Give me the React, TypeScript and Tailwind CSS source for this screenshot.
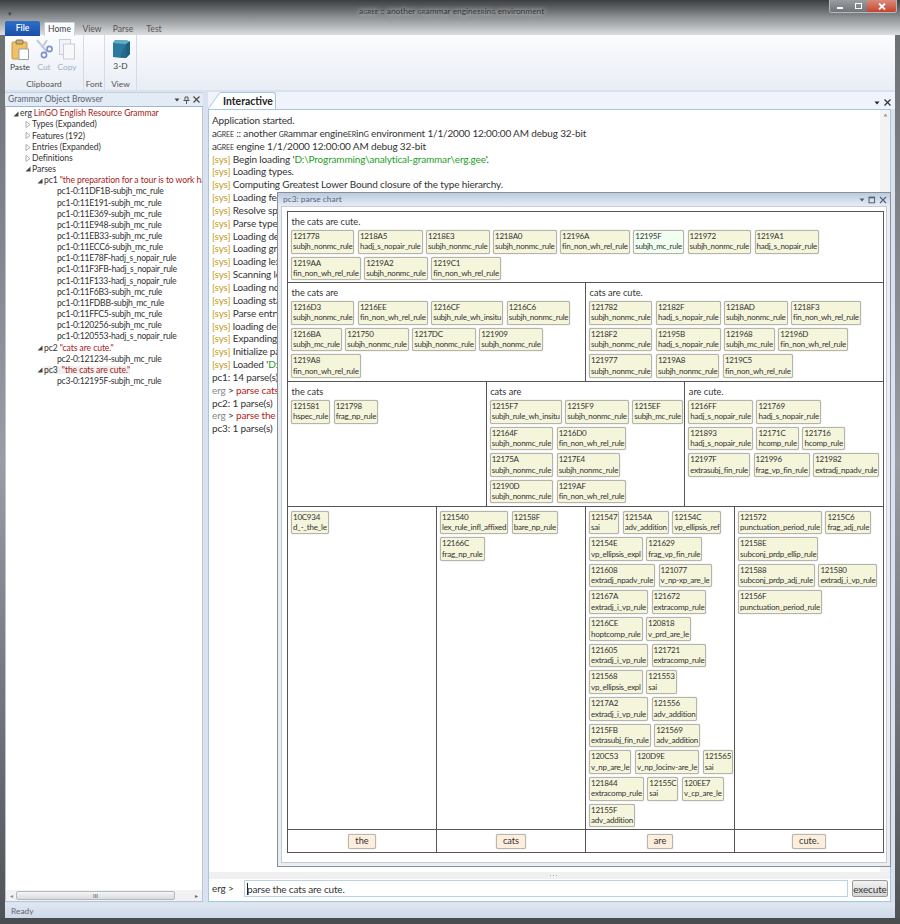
import React from "react";

const FONT = "font-['Lato','Open_Sans',sans-serif]";

function Sc({ children }: { children: React.ReactNode }) {
  return <span className="[font-variant:small-caps]">{children}</span>;
}

function Caret({ open }: { open: boolean }) {
  return open ? (
    <svg width="6" height="6" viewBox="0 0 6 6" className="shrink-0">
      <path d="M5.5 0.5V5.5H0.5Z" fill="#444" />
    </svg>
  ) : (
    <svg width="6" height="7" viewBox="0 0 6 7" className="shrink-0">
      <path d="M1 0.5L5 3.5L1 6.5Z" fill="#fff" stroke="#999" strokeWidth="0.8" />
    </svg>
  );
}

function TreeRow({
  pad,
  caret,
  children,
}: {
  pad: string;
  caret?: "open" | "closed";
  children: React.ReactNode;
}) {
  return (
    <div className={`flex h-[11.17px] items-center whitespace-nowrap leading-none ${pad}`}>
      {caret ? (
        <span className="flex w-[7px] shrink-0 items-center">
          <Caret open={caret === "open"} />
        </span>
      ) : null}
      {children}
    </div>
  );
}

const pc1Leaves = [
  "pc1-0:11DF1B-subjh_mc_rule",
  "pc1-0:11E191-subjh_mc_rule",
  "pc1-0:11E369-subjh_mc_rule",
  "pc1-0:11E948-subjh_mc_rule",
  "pc1-0:11EB33-subjh_mc_rule",
  "pc1-0:11ECC6-subjh_mc_rule",
  "pc1-0:11E78F-hadj_s_nopair_rule",
  "pc1-0:11F3FB-hadj_s_nopair_rule",
  "pc1-0:11F133-hadj_s_nopair_rule",
  "pc1-0:11F6B3-subjh_mc_rule",
  "pc1-0:11FDBB-subjh_mc_rule",
  "pc1-0:11FFC5-subjh_mc_rule",
  "pc1-0:120256-subjh_mc_rule",
  "pc1-0:120553-hadj_s_nopair_rule",
];

function Sys({ children }: { children: React.ReactNode }) {
  return (
    <div className="h-[12.85px] whitespace-nowrap leading-[12.85px]">
      <span className="text-[#c49a1c]">[sys]</span> {children}
    </div>
  );
}

function Line({ children }: { children: React.ReactNode }) {
  return <div className="h-[12.85px] whitespace-nowrap leading-[12.85px]">{children}</div>;
}

function Node({ spec }: { spec: string }) {
  const [id, rule, hl] = spec.split(" ");
  return (
    <div
      className={`h-[23.5px] shrink-0 whitespace-nowrap rounded-[2px] border border-[#b4b4a8] px-[1px] text-[8px] leading-[10.4px] tracking-[-0.25px] text-[#333] shadow-[0_0_1px_#999] ${
        hl ? "bg-[#f0fff0]" : "bg-[#f5f5dc]"
      }`}
    >
      <div>{id}</div>
      <div>{rule}</div>
    </div>
  );
}

function Cell({
  caption,
  rows,
  last,
}: {
  caption?: string;
  rows: string[][];
  last?: boolean;
}) {
  return (
    <div
      className={`min-w-0 flex-1 overflow-hidden px-[3px] pt-[3.5px] ${last ? "" : "border-r border-[#555]"}`}
    >
      {caption ? (
        <div className="h-[14.5px] pl-[0.5px] text-[9.2px] leading-[12px] text-[#333]">{caption}</div>
      ) : null}
      <div className="flex flex-col gap-[3.17px]">
        {rows.map((r, i) => (
          <div key={i} className="flex gap-[3.5px]">
            {r.map((s, j) => (
              <Node key={j} spec={s} />
            ))}
          </div>
        ))}
      </div>
    </div>
  );
}

function Word({ text, last }: { text: string; last?: boolean }) {
  return (
    <div
      className={`flex flex-1 items-center justify-center ${last ? "" : "border-r border-[#555]"}`}
    >
      <div className="flex h-[15px] items-center rounded-[2px] border border-[#b8b8b0] bg-[#fdeedd] px-[6px] text-[9.2px] leading-none text-[#333] shadow-[0_0_1px_#999]">
        {text}
      </div>
    </div>
  );
}

function ParseChart() {
  return (
    <div className="absolute left-[277px] top-[192px] flex h-[675px] w-[614px] flex-col border border-[#8b9097] bg-[#e9eef5]">
      <div className="flex h-[13px] shrink-0 items-center justify-between bg-gradient-to-b from-[#bccbe0] to-[#e6ecf5] pl-[5px] pr-[3px] text-[8.4px] leading-none text-[#55657d]">
        <span>pc3: parse chart</span>
        <span className="flex items-center gap-[3px]">
          <svg width="6" height="4" viewBox="0 0 6 4">
            <path d="M0.5 0.5H5.5L3 3.5Z" fill="#55606e" />
          </svg>
          <svg width="8" height="8" viewBox="0 0 8 8" fill="none" stroke="#55606e">
            <rect x="1" y="1.2" width="5.6" height="5.6" />
            <path d="M1 1.6H6.6" strokeWidth="1.4" />
          </svg>
          <svg width="8" height="8" viewBox="0 0 8 8" stroke="#55606e" strokeWidth="1.1">
            <path d="M1 1L7 7M7 1L1 7" />
          </svg>
        </span>
      </div>
      <div className="mx-[3px] mb-[3px] flex-1 border border-[#c7ccd3] bg-white pl-[5px] pt-[4px]">
        <div className="flex h-[642px] w-[597px] flex-col border border-[#555]">
          <div className="flex h-[71px] shrink-0 border-b border-[#555]">
            <Cell
              last
              caption="the cats are cute."
              rows={[
                [
                  "121778 subjh_nonmc_rule",
                  "1218A5 hadj_s_nopair_rule",
                  "1218E3 subjh_nonmc_rule",
                  "1218A0 subjh_nonmc_rule",
                  "12196A fin_non_wh_rel_rule",
                  "12195F subjh_mc_rule hl",
                  "121972 subjh_nonmc_rule",
                  "1219A1 hadj_s_nopair_rule",
                ],
                ["1219AA fin_non_wh_rel_rule", "1219A2 subjh_nonmc_rule", "1219C1 fin_non_wh_rel_rule"],
              ]}
            />
          </div>
          <div className="flex h-[99px] shrink-0 border-b border-[#555]">
            <Cell
              caption="the cats are"
              rows={[
                [
                  "1216D3 subjh_nonmc_rule",
                  "1216EE fin_non_wh_rel_rule",
                  "1216CF subjh_rule_wh_insitu",
                  "1216C6 subjh_nonmc_rule",
                ],
                ["1216BA subjh_mc_rule", "121750 subjh_nonmc_rule", "1217DC subjh_nonmc_rule", "121909 subjh_nonmc_rule"],
                ["1219A8 fin_non_wh_rel_rule"],
              ]}
            />
            <Cell
              last
              caption="cats are cute."
              rows={[
                ["121782 subjh_nonmc_rule", "12182F hadj_s_nopair_rule", "1218AD subjh_nonmc_rule", "1218F3 fin_non_wh_rel_rule"],
                ["1218F2 subjh_nonmc_rule", "12195B hadj_s_nopair_rule", "121968 subjh_mc_rule", "12196D fin_non_wh_rel_rule"],
                ["121977 subjh_nonmc_rule", "1219A8 subjh_nonmc_rule", "1219C5 fin_non_wh_rel_rule"],
              ]}
            />
          </div>
          <div className="flex h-[125px] shrink-0 border-b border-[#555]">
            <Cell caption="the cats" rows={[["121581 hspec_rule", "121798 frag_np_rule"]]} />
            <Cell
              caption="cats are"
              rows={[
                ["1215F7 subjh_rule_wh_insitu", "1215F9 subjh_nonmc_rule", "1215EF subjh_mc_rule"],
                ["12164F subjh_nonmc_rule", "1216D0 fin_non_wh_rel_rule"],
                ["12175A subjh_nonmc_rule", "1217E4 subjh_nonmc_rule"],
                ["12190D subjh_nonmc_rule", "1219AF fin_non_wh_rel_rule"],
              ]}
            />
            <Cell
              last
              caption="are cute."
              rows={[
                ["1216FF hadj_s_nopair_rule", "121769 hadj_s_nopair_rule"],
                ["121893 hadj_s_nopair_rule", "12171C hcomp_rule", "121716 hcomp_rule"],
                ["12197F extrasubj_fin_rule", "121996 frag_vp_fin_rule", "121982 extradj_npadv_rule"],
              ]}
            />
          </div>
          <div className="flex h-[323px] shrink-0 border-b border-[#555]">
            <Cell rows={[["10C934 d_-_the_le"]]} />
            <Cell rows={[["121540 lex_rule_infl_affixed", "12158F bare_np_rule"], ["12166C frag_np_rule"]]} />
            <Cell
              rows={[
                ["121547 sai", "12154A adv_addition", "12154C vp_ellipsis_ref"],
                ["12154E vp_ellipsis_expl", "121629 frag_vp_fin_rule"],
                ["121608 extradj_npadv_rule", "121077 v_np-xp_are_le"],
                ["12167A extradj_i_vp_rule", "121672 extracomp_rule"],
                ["1216CE hoptcomp_rule", "120818 v_prd_are_le"],
                ["121605 extradj_i_vp_rule", "121721 extracomp_rule"],
                ["121568 vp_ellipsis_expl", "121553 sai"],
                ["1217A2 extradj_i_vp_rule", "121556 adv_addition"],
                ["1215FB extrasubj_fin_rule", "121569 adv_addition"],
                ["120C53 v_np_are_le", "120D9E v_np_locinv-are_le", "121565 sai"],
                ["121844 extracomp_rule", "12155C sai", "120EE7 v_cp_are_le"],
                ["12155F adv_addition"],
              ]}
            />
            <Cell
              last
              rows={[
                ["121572 punctuation_period_rule", "1215C6 frag_adj_rule"],
                ["12158E subconj_prdp_ellip_rule"],
                ["121588 subconj_prdp_adj_rule", "121580 extradj_i_vp_rule"],
                ["12156F punctuation_period_rule"],
              ]}
            />
          </div>
          <div className="flex flex-1">
            <Word text="the" />
            <Word text="cats" />
            <Word text="are" />
            <Word text="cute." last />
          </div>
        </div>
      </div>
    </div>
  );
}

function Ribbon() {
  return (
    <div className="flex h-[55px] shrink-0 bg-gradient-to-b from-[#fbfcfe] to-[#e9edf5] text-[8.4px] text-[#555]">
      <div className="flex w-[79px] flex-col border-r border-[#d5dbe5]">
        <div className="flex h-[43px] pl-[5px] pt-[4px]">
          <div className="flex w-[20px] flex-col items-center">
            <svg width="20" height="21" viewBox="0 0 20 21">
              <rect x="2" y="3" width="15" height="17" rx="1" fill="#f0c066" stroke="#c8963c" />
              <rect x="6" y="1" width="7" height="4" rx="1" fill="#cdb27a" stroke="#8a7340" />
              <path d="M9 10H18.5V20.5H9Z" fill="#fff" stroke="#9aa0aa" />
            </svg>
            <span className="mt-[1px] leading-[12px] text-[#444]">Paste</span>
          </div>
          <div className="ml-[4px] flex w-[20px] flex-col items-center">
            <svg width="20" height="21" viewBox="0 0 20 21" fill="none">
              <path d="M3 1L13 13M13 1L8 9" stroke="#c3c9d2" strokeWidth="2" />
              <circle cx="15.5" cy="10" r="2.6" stroke="#7d92c9" strokeWidth="1.6" />
              <circle cx="10" cy="16" r="2.6" stroke="#7d92c9" strokeWidth="1.6" />
            </svg>
            <span className="mt-[1px] leading-[12px] text-[#9fb0c8]">Cut</span>
          </div>
          <div className="ml-[3px] flex w-[20px] flex-col items-center">
            <svg width="20" height="21" viewBox="0 0 20 21">
              <rect x="2.5" y="0.5" width="11" height="15" fill="#f1f3f6" stroke="#c9ced6" />
              <rect x="6.5" y="5" width="11" height="15" fill="#f7f8fa" stroke="#c9ced6" />
            </svg>
            <span className="mt-[1px] leading-[12px] text-[#9fb0c8]">Copy</span>
          </div>
        </div>
        <div className="text-center leading-[12px]">Clipboard</div>
      </div>
      <div className="flex w-[21px] flex-col justify-end border-r border-[#d5dbe5]">
        <div className="text-center leading-[12px]">Font</div>
      </div>
      <div className="flex w-[32px] flex-col border-r border-[#d5dbe5]">
        <div className="flex h-[43px] flex-col items-center pt-[4px]">
          <svg width="20" height="20" viewBox="0 0 20 20">
            <path d="M4 1L17 1.5L19 5V15L15 19L2 18V4Z" fill="#3a8aa8" />
            <path d="M2 4L15 5L15 19L2 18Z" fill="#2b7a9c" />
            <path d="M15 5L19 2V15L15 19Z" fill="#1f5f80" />
            <path d="M2 4L5 1L19 2L15 5Z" fill="#5faec8" />
            <path d="M9 18L15 5V19Z" fill="#256a8c" />
          </svg>
          <span className="mt-[1px] leading-[12px] text-[#444]">3-D</span>
        </div>
        <div className="text-center leading-[12px]">View</div>
      </div>
    </div>
  );
}

export default function App() {
  return (
    <div
      className={`relative flex h-[924px] w-[900px] flex-col overflow-hidden bg-gradient-to-b from-[#6a6d70] via-[#9a9da2] to-[#505356] text-[10px] text-[#333] ${FONT}`}
    >
      {/* title */}
      <div className="relative h-[35px] shrink-0 bg-gradient-to-b from-[#3c3f42] via-[#8e9194] to-[#dcdee0]">
        <div className="absolute left-[359px] top-[5px] text-[8.4px] leading-[12px] text-[#333] [text-shadow:0_0_5px_#fff]">
          a<Sc>gree</Sc> :: another <Sc>gr</Sc>ammar engine<Sc>er</Sc>in<Sc>g</Sc> environment
        </div>
        <div className="absolute left-[8px] top-[10px] text-[7px] leading-none text-[#444]">▾</div>
        <div className="absolute right-[3px] top-0 flex h-[13px] w-[68px] overflow-hidden rounded-b-[3px] border border-t-0 border-[#b5b8bc]">
          <div className="flex w-[19px] items-end justify-center bg-gradient-to-b from-[#9a9da0] to-[#70757a] pb-[3px]">
            <div className="h-[2px] w-[6px] bg-white" />
          </div>
          <div className="flex w-[18px] items-center justify-center bg-gradient-to-b from-[#9a9da0] to-[#70757a]">
            <div className="h-[6px] w-[7px] border border-white" />
          </div>
          <div className="flex flex-1 items-center justify-center bg-gradient-to-b from-[#d88a7c] to-[#c8402c]">
            <svg width="8" height="7" viewBox="0 0 8 7" stroke="#fff" strokeWidth="1.8">
              <path d="M1 0.5L7 6.5M7 0.5L1 6.5" />
            </svg>
          </div>
        </div>
        <div className="absolute bottom-[-1px] left-[5px] flex h-[15px] items-end text-[8.6px] text-[#555]">
          <div className="flex h-[15px] w-[35px] items-center justify-center rounded-t-[2px] bg-gradient-to-b from-[#2c6fc8] to-[#1a4fa8] font-semibold text-white">
            File
          </div>
          <div className="ml-[4px] flex h-[14px] w-[31px] items-center justify-center rounded-t-[2px] border border-b-0 border-[#c9d2df] bg-[#fbfcfe] text-[#444]">
            Home
          </div>
          <div className="ml-[6px] flex h-[14px] w-[22px] items-center justify-center">View</div>
          <div className="ml-[9px] flex h-[14px] w-[22px] items-center justify-center">Parse</div>
          <div className="ml-[9px] flex h-[14px] w-[22px] items-center justify-center">Test</div>
        </div>
      </div>

      {/* frame */}
      <div className="flex min-h-0 flex-1 flex-col pl-[5px] pr-[5px]">
        <div className="flex min-h-0 flex-1 flex-col bg-[#d9e2ee]">
          <Ribbon />
          <div className="flex min-h-0 flex-1 pt-[2px]">
            <div className="flex w-[198px] shrink-0 flex-col border-t border-[#c5d0e0] bg-[#e3ebf5]">
              <div className="flex h-[14px] shrink-0 items-center justify-between border-b border-[#9fb4cd] pl-[3px] pr-[3px] text-[8.5px] leading-none text-[#5a6472]">
                <span>Grammar Object Browser</span>
                <span className="flex items-center gap-[3px]">
                  <svg width="6" height="4" viewBox="0 0 6 4">
                    <path d="M0.5 0.5H5.5L3 3.5Z" fill="#444" />
                  </svg>
                  <svg width="7" height="8" viewBox="0 0 7 8" stroke="#555" fill="none">
                    <path d="M2 1H5V4.5H2ZM0.5 4.5H6.5M3.5 4.5V8" />
                  </svg>
                  <svg width="7" height="7" viewBox="0 0 7 7" stroke="#444" strokeWidth="1.1">
                    <path d="M0.5 0.5L6.5 6.5M6.5 0.5L0.5 6.5" />
                  </svg>
                </span>
              </div>
              <div className="flex min-h-0 flex-1 flex-col overflow-hidden border-x border-b border-[#b5c6da] bg-white">
                <div className="min-h-0 flex-1 overflow-hidden pt-[1px] text-[8.6px] tracking-[-0.08px] text-[#333]">
                  <TreeRow pad="pl-[7px]" caret="open">
                    erg <span className="ml-[2px] text-[#a82020]">LinGO English Resource Grammar</span>
                  </TreeRow>
                  {["Types (Expanded)", "Features (192)", "Entries (Expanded)", "Definitions"].map((t) => (
                    <TreeRow key={t} pad="pl-[19px]" caret="closed">
                      {t}
                    </TreeRow>
                  ))}
                  <TreeRow pad="pl-[19px]" caret="open">
                    Parses
                  </TreeRow>
                  <TreeRow pad="pl-[31px]" caret="open">
                    pc1{" "}
                    <span className="ml-[2px] text-[#a82020]">"the preparation for a tour is to work hard."</span>
                  </TreeRow>
                  {pc1Leaves.map((t) => (
                    <TreeRow key={t} pad="pl-[51px] tracking-[-0.25px]">
                      {t}
                    </TreeRow>
                  ))}
                  <TreeRow pad="pl-[31px]" caret="open">
                    pc2 <span className="ml-[2px] text-[#a82020]">"cats are cute."</span>
                  </TreeRow>
                  <TreeRow pad="pl-[51px] tracking-[-0.25px]">pc2-0:121234-subjh_mc_rule</TreeRow>
                  <TreeRow pad="pl-[31px]" caret="open">
                    <span className="bg-[#f0f0f0]">
                      pc3 <span className="ml-[2px] text-[#a82020]">"the cats are cute."</span>
                    </span>
                  </TreeRow>
                  <TreeRow pad="pl-[51px] tracking-[-0.25px]">pc3-0:12195F-subjh_mc_rule</TreeRow>
                </div>
                <div className="flex h-[11px] shrink-0 items-center bg-[#f1f2f4] px-[4px]">
                  <span className="text-[6px] leading-none text-[#888]">◂</span>
                  <div className="ml-[3px] flex h-[9px] w-[159px] items-center justify-center rounded-[2px] border border-[#b5b8bd] bg-gradient-to-b from-[#f4f5f6] to-[#d8dadd] text-[6px] leading-none text-[#555]">
                    III
                  </div>
                  <span className="ml-auto text-[6px] leading-none text-[#666]">▸</span>
                </div>
              </div>
            </div>

            <div className="ml-[5px] flex min-w-0 flex-1 flex-col">
              <div className="flex h-[17px] shrink-0 items-end justify-between bg-[#f0f3fb]">
                <div className="relative flex h-[17px] w-[68px] items-center rounded-tr-[3px] border-r border-t border-[#a5c8df] bg-white pl-[15px] text-[10.4px] font-bold leading-none text-[#222]">
                  <svg width="14" height="17" viewBox="0 0 14 17" className="absolute left-0 top-[-1px]">
                    <path d="M0 0H14V17H0Z" fill="#f0f3fb" />
                    <path d="M0 17L12 0.5H14V17Z" fill="#fff" />
                    <path d="M0 17L12 0.5H14" fill="none" stroke="#a5c8df" />
                  </svg>
                  <span className="relative">Interactive</span>
                </div>
                <span className="mb-[3px] mr-[4px] flex items-center gap-[4px]">
                  <svg width="6" height="4" viewBox="0 0 6 4">
                    <path d="M0.5 0.5H5.5L3 3.5Z" fill="#222" />
                  </svg>
                  <svg width="7" height="7" viewBox="0 0 7 7" stroke="#333" strokeWidth="1.2">
                    <path d="M0.5 0.5L6.5 6.5M6.5 0.5L0.5 6.5" />
                  </svg>
                </span>
              </div>
              <div className="flex min-h-0 w-[683px] flex-1 flex-col border border-[#a5c8df] bg-white text-[10px] tracking-[-0.15px]">
                <div className="relative min-h-0 flex-1 overflow-hidden pl-[3px] pt-[4px] text-[#333]">
                  <div className="absolute right-0 top-0 flex h-full w-[10px] justify-center bg-[#f3f3f4] pt-[3px]">
                    <svg width="5" height="4" viewBox="0 0 5 4">
                      <path d="M0.5 3.5L2.5 0.5L4.5 3.5Z" fill="#999" />
                    </svg>
                  </div>
                  <Line>Application started.</Line>
                  <Line>
                    a<Sc>gree</Sc> :: another <Sc>gr</Sc>ammar engine<Sc>er</Sc>in<Sc>g</Sc> environment 1/1/2000
                    12:00:00 AM debug 32-bit
                  </Line>
                  <Line>
                    a<Sc>gree</Sc> engine 1/1/2000 12:00:00 AM debug 32-bit
                  </Line>
                  <Sys>
                    Begin loading '<span className="text-[#1fa01f]">D:\Programming\analytical-grammar\erg.gee</span>'.
                  </Sys>
                  <Sys>Loading types.</Sys>
                  <Sys>Computing Greatest Lower Bound closure of the type hierarchy.</Sys>
                  <Sys>Loading features.</Sys>
                  <Sys>Resolve special types.</Sys>
                  <Sys>Parse type definitions.</Sys>
                  <Sys>Loading definitions.</Sys>
                  <Sys>Loading grammar rules.</Sys>
                  <Sys>Loading lexical rules.</Sys>
                  <Sys>Scanning lexicon.</Sys>
                  <Sys>Loading node labels.</Sys>
                  <Sys>Loading start symbols.</Sys>
                  <Sys>Parse entry definitions.</Sys>
                  <Sys>loading definitions.</Sys>
                  <Sys>Expanding types.</Sys>
                  <Sys>Initialize parser.</Sys>
                  <Sys>
                    Loaded '<span className="text-[#1fa01f]">D:\Programming\analytical-grammar\erg.gee</span>'.
                  </Sys>
                  <Line>pc1: 14 parse(s)</Line>
                  <Line>
                    <span className="text-[#888]">erg</span> &gt;{" "}
                    <span className="text-[#b22222]">parse cats are cute.</span>
                  </Line>
                  <Line>pc2: 1 parse(s)</Line>
                  <Line>
                    <span className="text-[#888]">erg</span> &gt;{" "}
                    <span className="text-[#b22222]">parse the cats are cute.</span>
                  </Line>
                  <Line>pc3: 1 parse(s)</Line>
                </div>
                <div className="flex h-[7px] shrink-0 items-center justify-center gap-[1px] bg-[#f0f0f0] pl-[7px]">
                  <span className="h-[1px] w-[1px] bg-[#aaa]" />
                  <span className="ml-[1px] h-[1px] w-[1px] bg-[#aaa]" />
                  <span className="ml-[1px] h-[1px] w-[1px] bg-[#aaa]" />
                </div>
                <div className="flex h-[22px] shrink-0 items-start pl-[3px] pt-[1px]">
                  <span className="w-[32px] leading-[17px]">erg &gt;</span>
                  <div className="flex h-[17px] w-[604px] items-center border border-[#b9d2e4] bg-white pl-[2px] leading-none">
                    <span className="mr-[-1px] h-[12px] w-[1px] bg-[#222]" />
                    parse the cats are cute.
                  </div>
                  <div className="ml-[4px] flex h-[17px] w-[36px] items-center justify-center rounded-[2px] border border-[#9a9a9a] bg-gradient-to-b from-[#f2f2f2] to-[#d4d4d4] leading-none text-[#333]">
                    execute
                  </div>
                </div>
              </div>
            </div>
          </div>
          <div className="mt-[1px] flex h-[15px] shrink-0 items-center bg-gradient-to-b from-[#dfe7f2] to-[#cfd9e8] pl-[6px] pt-[2px] text-[8.4px] leading-none text-[#666]">
            Ready
          </div>
        </div>
      </div>
      <div className="h-[6px] shrink-0 bg-[#4a4d50]" />
      <ParseChart />
    </div>
  );
}
